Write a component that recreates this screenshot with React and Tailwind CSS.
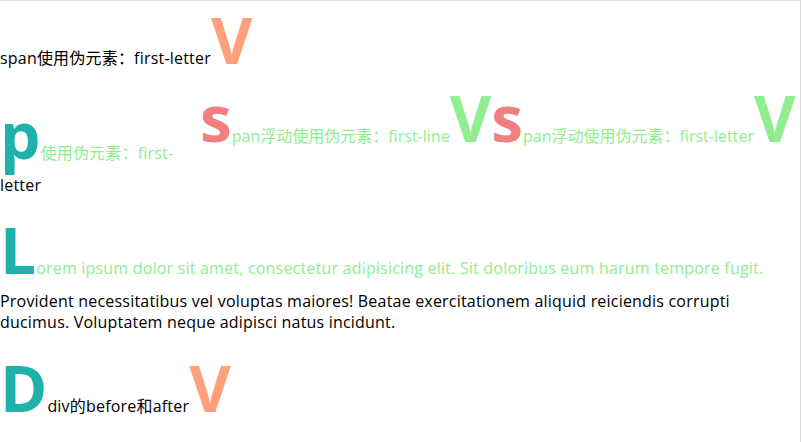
export default function App() {
  const font = { fontFamily: '"Open Sans", "Noto Sans CJK SC", sans-serif' };
  const big = "text-[64px] leading-none font-bold tracking-normal";
  return (
    <div
      className="w-[801px] h-[442px] overflow-hidden border-t border-r border-[#dadada] bg-white text-black text-[16px] leading-[21px] tracking-[0.2px]"
      style={font}
    >
      {/* Row 1 */}
      <div className="flex items-baseline mt-[7px]">
        <span>span使用伪元素：first-letter</span>
        <span className={`${big} text-[#FFA07A]`}>V</span>
      </div>

      {/* Row 2 */}
      <div className="flex items-start">
        <div className="w-[200px] shrink-0">
          <div className="flex items-baseline mt-[31px]">
            <span className={`${big} text-[#20B2AA]`}>p</span>
            <span className="text-[#90EE90]">使用伪元素：first-</span>
          </div>
          <div className="mt-[8px]">letter</div>
        </div>
        <div className="flex items-baseline mt-[14px] tracking-normal">
          <span className={`${big} text-[#F08080]`}>s</span>
          <span className="text-[#90EE90] whitespace-nowrap">pan浮动使用伪元素：first-line</span>
          <span className={`${big} text-[#90EE90]`}>V</span>
        </div>
        <div className="flex items-baseline mt-[14px] tracking-normal">
          <span className={`${big} text-[#F08080]`}>s</span>
          <span className="text-[#90EE90] whitespace-nowrap">pan浮动使用伪元素：first-letter</span>
          <span className={`${big} text-[#90EE90]`}>V</span>
        </div>
      </div>

      {/* Row 3 */}
      <div className="flex items-baseline mt-[22px]">
        <span className={`${big} text-[#20B2AA]`}>L</span>
        <span className="text-[#90EE90] whitespace-nowrap">
          orem ipsum dolor sit amet, consectetur adipisicing elit. Sit doloribus eum harum tempore fugit.
        </span>
      </div>
      <p className="mt-[9px] whitespace-nowrap">
        Provident necessitatibus vel voluptas maiores! Beatae exercitationem aliquid reiciendis corrupti
        <br />
        ducimus. Voluptatem neque adipisci natus incidunt.
      </p>

      {/* Row 4 */}
      <div className="flex items-baseline mt-[23px]">
        <span className={`${big} text-[#20B2AA]`}>D</span>
        <span>div的before和after</span>
        <span className={`${big} text-[#FFA07A]`}>V</span>
      </div>
    </div>
  );
}
